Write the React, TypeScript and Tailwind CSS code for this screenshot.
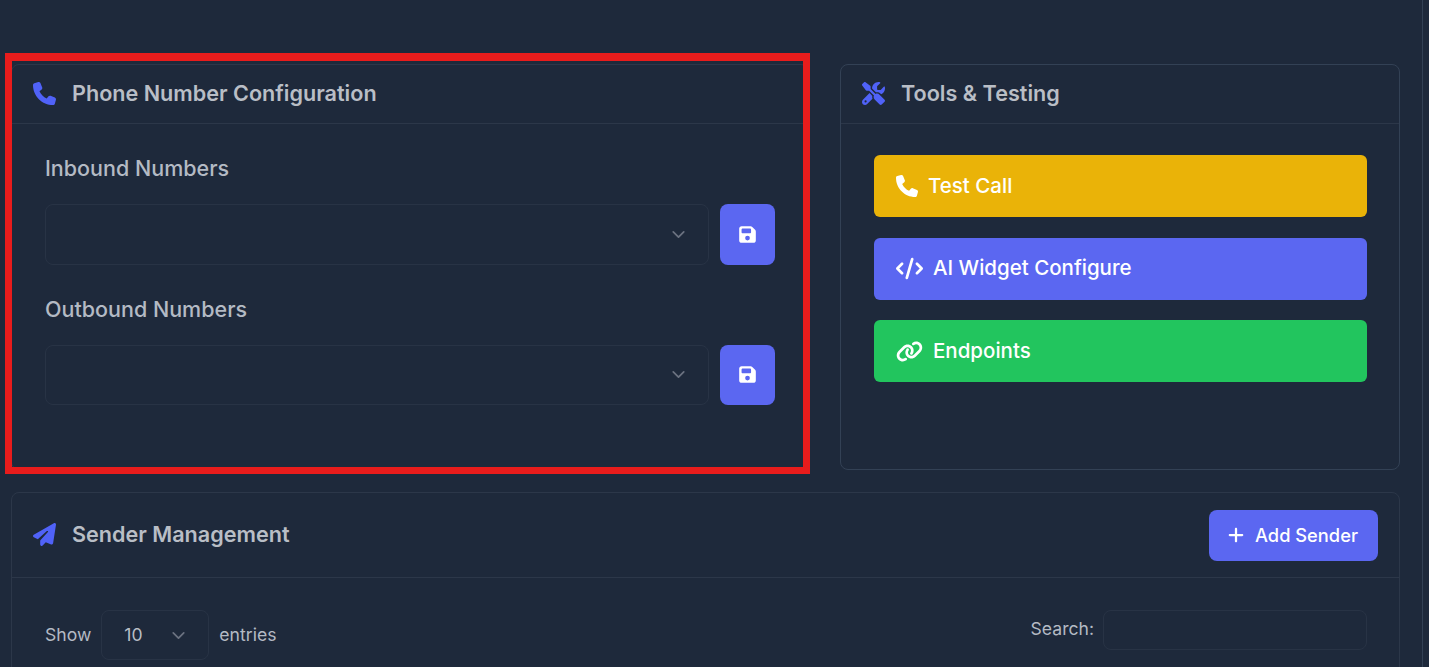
import { FaPhone, FaScrewdriverWrench, FaPaperPlane, FaFloppyDisk, FaCode, FaLink, FaPlus } from "react-icons/fa6";
import { ChevronDown } from "lucide-react";
import type { ReactNode } from "react";

const CardHead = ({ icon, title }: { icon: ReactNode; title: string }) => (
  <div className="flex items-center h-[59px] pl-[21px] pr-[21px] pb-[2px] border-b border-[#2c3749]">
    <div className="flex items-center gap-[16px]">
      <span className="w-[23px] flex justify-center text-[#5062f8] text-[23px]">{icon}</span>
      <h2 className="text-[21.6px] leading-[28px] font-semibold text-[#b9bec6]">{title}</h2>
    </div>
  </div>
);

const NumberSelect = ({ label }: { label: string }) => (
  <div>
    <label className="block text-[21.5px] leading-[28px] font-medium text-[#b4bac4] mb-[22px]">{label}</label>
    <div className="flex gap-[11px]">
      <div className="flex-1 h-[60.5px] rounded-lg border border-[#283345] flex items-center justify-end pr-[19px]">
        <ChevronDown className="text-[#6b7280]" size={21} />
      </div>
      <button className="w-[55px] h-[60.5px] rounded-lg bg-[#5b67f1] flex items-center justify-center text-white text-[19px]">
        <FaFloppyDisk />
      </button>
    </div>
  </div>
);

const ActionButton = ({ icon, label, color }: { icon: ReactNode; label: string; color: string }) => (
  <button className={`w-full h-[62px] rounded-md flex items-center gap-[10px] pl-[22px] text-white text-[20.5px] font-medium ${color}`}>
    {icon}
    {label}
  </button>
);

export default function App() {
  return (
    <div className="relative h-[667px] overflow-hidden bg-[#1e293b] font-['Inter',sans-serif]">
      <div className="w-[1423px] h-full border-r border-[#334155] pt-[64px] pl-[11px] pr-[22px]">
        <div className="flex gap-[31px] h-[406px] mb-[22px]">
          <section className="w-[798px] rounded-lg border border-[#2c3749]">
            <CardHead icon={<FaPhone />} title="Phone Number Configuration" />
            <div className="px-[33px] pt-[30px] flex flex-col gap-[30px]">
              <NumberSelect label="Inbound Numbers" />
              <NumberSelect label="Outbound Numbers" />
            </div>
          </section>
          <section className="flex-1 rounded-lg border border-[#334155]">
            <CardHead icon={<FaScrewdriverWrench />} title="Tools & Testing" />
            <div className="pl-[33px] pr-[32px] pt-[31px] flex flex-col gap-[20.5px]">
              <ActionButton icon={<FaPhone className="text-[22px]" />} label="Test Call" color="bg-[#eab308]" />
              <ActionButton icon={<FaCode className="text-[27px]" />} label="AI Widget Configure" color="bg-[#5b67f1]" />
              <ActionButton icon={<FaLink className="text-[27px]" />} label="Endpoints" color="bg-[#22c55e]" />
            </div>
          </section>
        </div>
        <section className="rounded-t-lg border border-[#2c3749] h-[300px]">
          <div className="flex items-center justify-between h-[85px] pl-[21px] pr-[21px] border-b border-[#2c3749]">
            <div className="flex items-center gap-[16px] pb-[2px]">
              <span className="w-[23px] flex justify-center text-[#5062f8] text-[23px]"><FaPaperPlane /></span>
              <h2 className="text-[21.6px] leading-[28px] font-semibold text-[#b9bec6]">Sender Management</h2>
            </div>
            <button className="w-[169px] h-[51px] pr-[2px] rounded-lg bg-[#5b67f1] flex items-center justify-center gap-[10px] text-white text-[18.3px] font-medium">
              <FaPlus className="text-[18px]" />
              <span className="pt-[1px]">Add Sender</span>
            </button>
          </div>
          <div className="flex items-start justify-between pl-[33px] pr-[32px] pt-[32px]">
            <div className="flex items-center gap-[10px] text-[17.6px] text-[#b4bac4]">
              <span>Show</span>
              <div className="w-[108px] h-[50px] rounded-lg border border-[#283345] flex items-center justify-between pl-[22px] pr-[19px] text-[#b9bec6]">
                10
                <ChevronDown className="text-[#6b7280]" size={21} />
              </div>
              <span>entries</span>
            </div>
            <div className="flex items-center gap-[9px] text-[17.6px] text-[#b4bac4]">
              <span className="-mt-[2px]">Search:</span>
              <div className="w-[264px] h-[40px] rounded-lg border border-[#283345]" />
            </div>
          </div>
        </section>
      </div>
      {/* red annotation drawn over the screenshot */}
      <div className="absolute left-[5px] top-[53px] w-[805px] h-[421px] border-[7px] border-t-[8px] border-[#e81c1c] pointer-events-none" />
    </div>
  );
}
